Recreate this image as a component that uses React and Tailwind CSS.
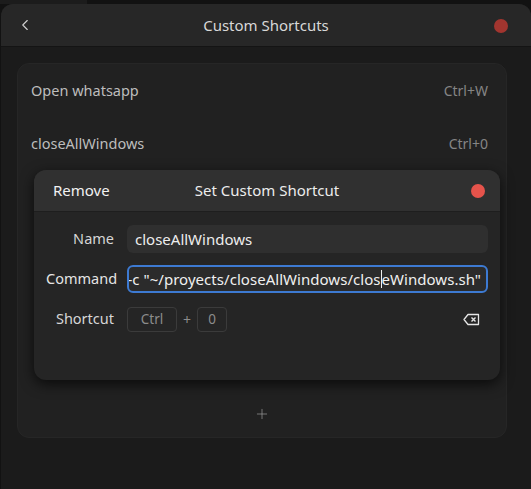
import React from "react";
import { ChevronLeft, Plus } from "lucide-react";

const font = { fontFamily: "'Noto Sans', 'Open Sans', sans-serif" };

function BackspaceIcon() {
  return (
    <svg width="17" height="13" viewBox="0 0 17 13" fill="none">
      <path d="M5 1.5h10.5v10H5L1 6.5z" stroke="#e6e6e6" strokeWidth="1.3" strokeLinejoin="round" />
      <path d="M8.5 4.5l4 4M12.5 4.5l-4 4" stroke="#e6e6e6" strokeWidth="1.4" />
    </svg>
  );
}

/* ================= LIST ROW ================= */
function Row({ name, keys }) {
  return (
    <div className="h-[53px] flex items-center justify-between pl-[13px] pr-[18px]">
      <span className="text-[14.5px] text-[#bdbdbd]">{name}</span>
      <span className="text-[14px] text-[#858585]">{keys}</span>
    </div>
  );
}

/* ================= DIALOG ================= */
function ShortcutDialog() {
  return (
    <div className="absolute left-[16px] top-[106px] w-[466px] h-[210px] rounded-[12px] bg-[#252525] shadow-[0_4px_14px_rgba(0,0,0,0.7)] overflow-hidden flex flex-col">
      <div className="h-[42px] shrink-0 bg-[#303030] border-b border-[#1e1e1e] flex items-center relative">
        <span className="ml-[19px] text-[15px] text-[#f2f2f2]">Remove</span>
        <span className="absolute left-0 right-0 text-center text-[15px] text-[#ececec]">Set Custom Shortcut</span>
        <span className="absolute right-[15px] top-[14px] w-[14px] h-[14px] rounded-full bg-[#e5534b]" />
      </div>

      <div className="flex flex-col pt-[13px] pl-[12px] pr-[12px]">
        <div className="flex items-center h-[28px]">
          <span className="w-[68px] text-right text-[14.5px] text-[#d6d6d6]">Name</span>
          <div className="ml-[13px] flex-1 h-[28px] rounded-[6px] bg-[#2f2f2f] flex items-center px-[8px] text-[15px] text-[#ededed]">
            closeAllWindows
          </div>
        </div>

        <div className="flex items-center h-[28px] mt-[12px]">
          <span className="w-[68px] text-right text-[14.5px] text-[#e4e4e4]">Command</span>
          <div className="ml-[13px] flex-1 h-[28px] rounded-[6px] bg-[#2b2b2b] border-2 border-[#3d7ad2] relative overflow-hidden text-[15px] tracking-[0.04px] text-[#f0f0f0]">
            <div className="absolute right-[5px] top-0 bottom-0 flex items-center whitespace-pre">
              <span className="shrink-0">bash -c "~/proyects/closeAllWindows/clos</span>
              <span className="shrink-0 inline-block w-px h-[18px] bg-[#f0f0f0]" />
              <span className="shrink-0">eWindows.sh"</span>
            </div>
          </div>
        </div>

        <div className="flex items-center h-[26px] mt-[13px]">
          <span className="w-[68px] text-right text-[14.5px] text-[#d6d6d6]">Shortcut</span>
          <div className="ml-[13px] w-[50px] h-[25px] rounded-[4px] border border-[#3b3b3b] flex items-center justify-center text-[13.5px] text-[#8c8c8c]">
            Ctrl
          </div>
          <span className="mx-[6px] text-[14px] text-[#8c8c8c]">+</span>
          <div className="w-[30px] h-[25px] rounded-[4px] border border-[#3b3b3b] flex items-center justify-center text-[13.5px] text-[#8c8c8c]">
            0
          </div>
          <div className="ml-auto mr-[8px] flex items-center">
            <BackspaceIcon />
          </div>
        </div>
      </div>
    </div>
  );
}

/* ================= MAIN ================= */
export default function App() {
  return (
    <div className="w-[531px] h-[489px] bg-[#121212] flex flex-col overflow-hidden" style={font}>
      <div className="h-[4px] shrink-0 flex">
        <div className="w-[87px] bg-[#1c1c1c]" />
        <div className="flex-1 bg-[#121212]" />
      </div>

      <div className="flex-1 ml-[1px] rounded-t-[12px] bg-[#1b1b1b] flex flex-col overflow-hidden">
        <div className="h-[43px] shrink-0 bg-[#272727] border-b border-[#141414] flex items-center relative">
          <ChevronLeft size={18} strokeWidth={1.5} className="ml-[15px] text-[#d0d0d0]" />
          <span className="absolute left-0 right-0 text-center text-[15px] text-[#d8d8d8] pointer-events-none">
            Custom Shortcuts
          </span>
          <span className="absolute right-[23px] top-[15px] w-[14px] h-[14px] rounded-full bg-[#a2352f]" />
        </div>

        <div className="pt-[16px] pl-[16px]">
          <div className="relative w-[490px] h-[375px] rounded-[12px] bg-[#212121] border border-[#262626] flex flex-col">
            <Row name="Open whatsapp" keys="Ctrl+W" />
            <Row name="closeAllWindows" keys="Ctrl+0" />
            <div className="flex-1" />
            <div className="h-[52px] pt-[5px] flex items-center justify-center">
              <Plus size={16} strokeWidth={1} className="text-[#a0a0a0]" />
            </div>
            <ShortcutDialog />
          </div>
        </div>
      </div>
    </div>
  );
}
